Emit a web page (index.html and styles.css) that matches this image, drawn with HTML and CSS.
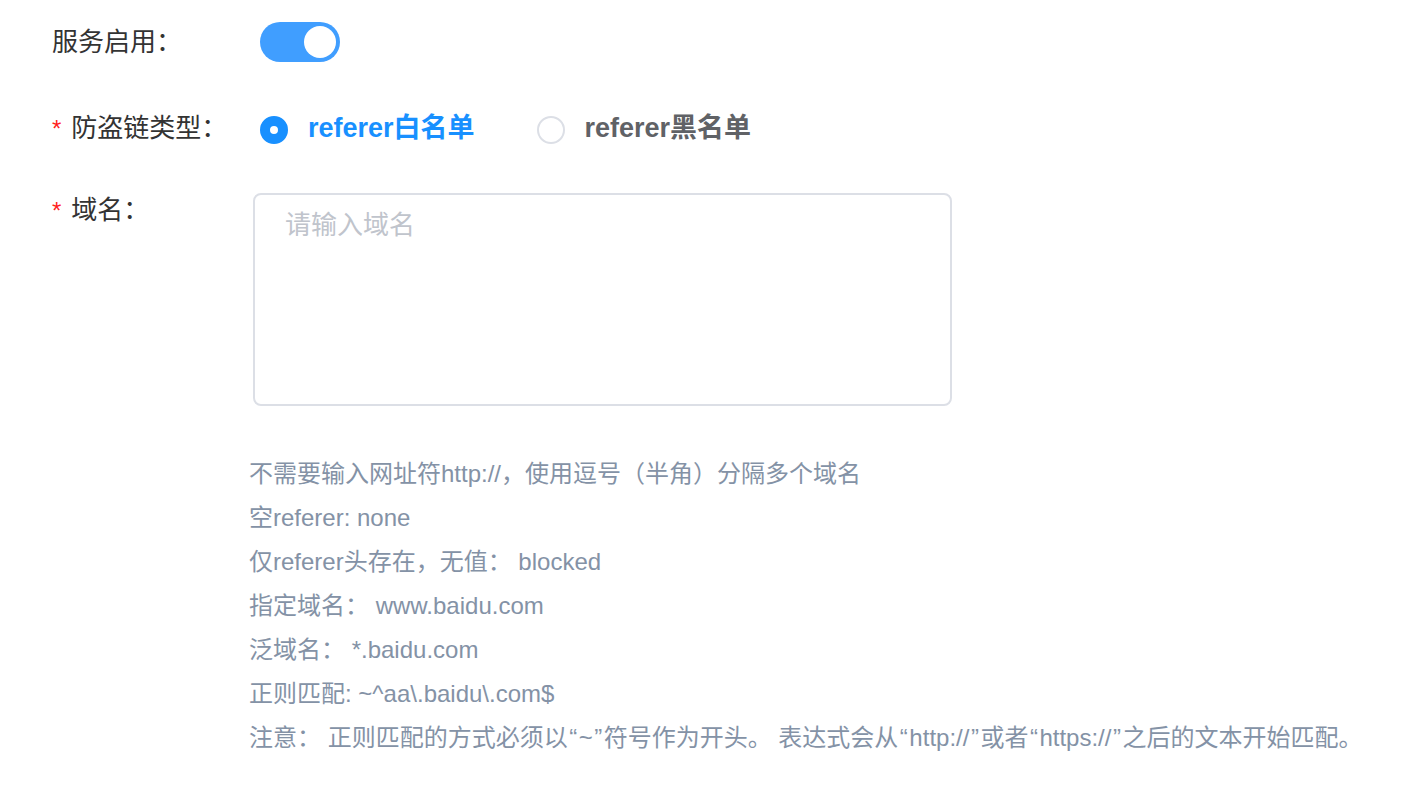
FILE: index.html
```html
<!DOCTYPE html>
<html>
  <head>
    <meta charset="utf-8">
    <meta name="viewport" content="width=device-width, initial-scale=1">
    <link rel="stylesheet" href="styles.css">
  </head>
  <body>
    <div class="form">
      <div class="row row-switch">
        <div class="label">服务启用：</div>
        <div class="field">
          <span class="switch on"><span class="knob"></span></span>
        </div>
      </div>

      <div class="row row-radio">
        <div class="label"><span class="req">*</span>防盗链类型：</div>
        <div class="field">
          <label class="radio checked"><span class="dot"></span><span class="txt">referer白名单</span></label>
          <label class="radio"><span class="dot"></span><span class="txt">referer黑名单</span></label>
        </div>
      </div>

      <div class="row row-text">
        <div class="label"><span class="req">*</span>域名：</div>
        <div class="field">
          <textarea class="domains" placeholder="请输入域名"></textarea>
        </div>
      </div>

      <div class="help">
        <p>不需要输入网址符http://，使用逗号（半角）分隔多个域名</p>
        <p>空referer: none</p>
        <p>仅referer头存在，无值： blocked</p>
        <p>指定域名： www.baidu.com</p>
        <p>泛域名： *.baidu.com</p>
        <p>正则匹配: ~^aa\.baidu\.com$</p>
        <p>注意： 正则匹配的方式必须以<span class="q">“</span>~<span class="q">”</span>符号作为开头。 表达式会从<span class="q">“</span>http://<span class="q">”</span>或者<span class="q">“</span>https://<span class="q">”</span>之后的文本开始匹配。</p>
      </div>
    </div>
  </body>
</html>
```

FILE: styles.css
```css
body {
  margin: 0;
  background: #fff;
  font-family: "Liberation Sans", "Noto Sans CJK SC", sans-serif;
}

.form {
  padding: 20px 0 0 52px;
}

.row {
  display: flex;
}

.label {
  width: 208px;
  font-size: 26px;
  line-height: 26px;
  color: #333;
  white-space: nowrap;
}

.req {
  color: #ff1f1f;
  margin-right: 10px;
  font-size: 24px;
}

.row-switch {
  height: 44px;
  align-items: center;
}

.row-radio {
  height: 44px;
  align-items: center;
  margin-top: 44px;
}

.row-radio .label {
  margin-top: -3px;
}

.row-text {
  margin-top: 41px;
}

.row-text .label {
  margin-top: 4px;
}

.row-text .field {
  margin-left: -7px;
}

.field {
  display: flex;
  align-items: center;
}

/* switch */
.switch {
  display: inline-block;
  position: relative;
  width: 80px;
  height: 40px;
  border-radius: 20px;
  background: #409eff;
}

.switch .knob {
  position: absolute;
  top: 4px;
  right: 4px;
  width: 32px;
  height: 32px;
  border-radius: 50%;
  background: #fff;
}

/* radio */
.radio {
  display: flex;
  align-items: center;
  font-size: 27px;
  font-weight: bold;
  color: #606266;
  margin-right: 62px;
}

.radio .txt {
  line-height: 28px;
  margin-top: -4px;
}

.radio .dot {
  box-sizing: border-box;
  width: 28px;
  height: 28px;
  border-radius: 50%;
  border: 2px solid #dcdfe6;
  margin-right: 20px;
  background: #fff;
}

.radio.checked {
  color: #1890ff;
}

.radio.checked .dot {
  border: 10px solid #1890ff;
}

/* textarea */
.domains {
  box-sizing: border-box;
  width: 699px;
  height: 213px;
  border: 2px solid #dcdfe6;
  border-radius: 8px;
  padding: 12px 30px;
  font-family: "Liberation Sans", "Noto Sans CJK SC", sans-serif;
  font-size: 26px;
  line-height: 36px;
  resize: none;
  outline: none;
  color: #606266;
}

.domains::placeholder {
  color: #c0c4cc;
}

/* help text */
.help {
  margin: 46px 0 0 197px;
  color: #8492a6;
  font-size: 24px;
}

.help p {
  margin: 0;
  line-height: 44px;
  white-space: nowrap;
}

/* quote marks are a bit wider in the original font */
.help .q {
  margin: 0 1.5px;
}
```
